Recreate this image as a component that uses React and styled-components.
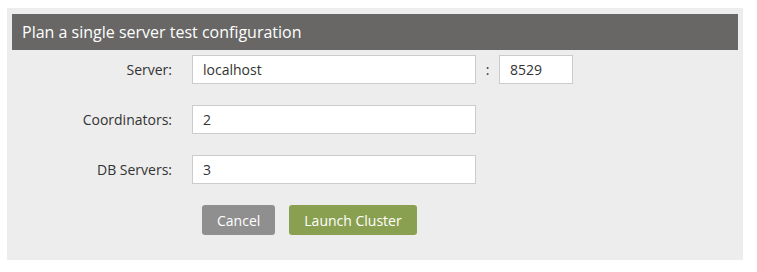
import styled, { createGlobalStyle } from "styled-components";

const GlobalStyle = createGlobalStyle`
  body {
    margin: 0;
    background: #fff;
    font-family: "Open Sans", "Liberation Sans", sans-serif;
  }
`;

const Panel = styled.div`
  margin: 8px 0 0 7px;
  width: 736px;
  height: 252px;
  box-sizing: border-box;
  padding: 6px 5px 0;
  background-color: #ededed;
`;

const Title = styled.h2`
  margin: 0;
  height: 36px;
  display: flex;
  align-items: center;
  padding-left: 10px;
  background-color: #686765;
  color: #fff;
  font-size: 16px;
  font-weight: 400;
`;

const Form = styled.div`
  display: grid;
  grid-template-columns: 160px 284px auto;
  column-gap: 20px;
  row-gap: 21px;
  padding-top: 5px;
  align-items: center;
`;

const Label = styled.label`
  text-align: right;
  font-size: 14px;
  color: #333;
`;

const Input = styled.input`
  box-sizing: border-box;
  width: ${(props) => props.$width || 284}px;
  height: 29px;
  border: 1px solid #cccccc;
  background: #fff;
  padding: 0 10px;
  font-family: inherit;
  font-size: 14px;
  color: #333;
  outline: none;
`;

const PortBox = styled.div`
  display: flex;
  align-items: center;
  margin-left: -20px;
`;

const Colon = styled.span`
  width: 23px;
  text-align: center;
  font-size: 14px;
  color: #333;
`;

const ButtonRow = styled.div`
  grid-column: 2 / 4;
  display: flex;
  gap: 14px;
  padding-left: 10px;
`;

const Button = styled.button`
  height: 30px;
  padding: 0 ${(props) => props.$pad}px;
  border: none;
  border-radius: 3px;
  background-color: ${(props) => props.$color};
  color: #fff;
  font-family: inherit;
  font-size: 14px;
  cursor: pointer;
`;

const App = () => {
  return (
    <>
      <GlobalStyle />
      <Panel>
        <Title>Plan a single server test configuration</Title>
        <Form>
          <Label>Server:</Label>
          <Input defaultValue="localhost" />
          <PortBox>
            <Colon>:</Colon>
            <Input $width={74} defaultValue="8529" />
          </PortBox>

          <Label>Coordinators:</Label>
          <Input defaultValue="2" />
          <span />

          <Label>DB Servers:</Label>
          <Input defaultValue="3" />
          <span />

          <span />
          <ButtonRow>
            <Button $color="#8f8f8f" $pad={15}>Cancel</Button>
            <Button $color="#8aa051" $pad={15}>Launch Cluster</Button>
          </ButtonRow>
        </Form>
      </Panel>
    </>
  );
};

export default App;
